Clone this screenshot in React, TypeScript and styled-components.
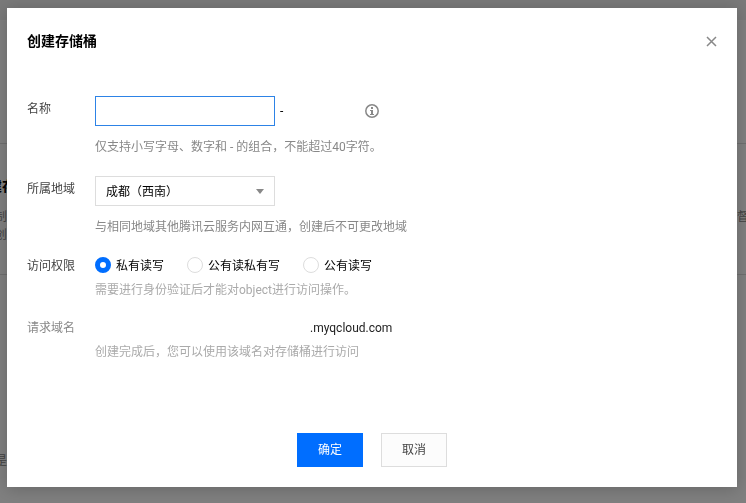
import React, { useState } from "react";
import styled, { createGlobalStyle, css } from "styled-components";

const GlobalStyle = createGlobalStyle`
  * { box-sizing: border-box; }
  body {
    margin: 0;
    overflow: hidden;
    background: #fff;
    color: #000;
    font: 12px/20px Roboto, "Noto Sans CJK SC", sans-serif;
  }
  h1, h2, p { margin: 0; }
  button, input, select { font: inherit; }
`;

const Page = styled.div`
  min-height: 100vh;
  overflow: hidden;
`;

const PageBar = styled.div`
  height: 20px;
  background: #f2f2f2;
`;

const PageSection = styled.section<{ $height: number }>`
  min-height: ${(p) => p.$height}px;
  padding-top: 32px;
  border-bottom: 1px solid #ddd;
`;

const PageTitle = styled.h2`
  margin-bottom: 12px;
  font-size: 14px;
  line-height: 20px;
  text-indent: -26px;
`;

const PageText = styled.p`
  display: flex;
  justify-content: space-between;
  margin: 0 -3px 0 -5px;
  line-height: 18px;
  color: #888;
`;

const PageLink = styled.a`
  display: block;
  margin: 176px 0 0 -5px;
  color: #888;
  text-decoration: none;
`;

const Backdrop = styled.div`
  position: fixed;
  inset: 0;
  padding: 8px 9px 16px 7px;
  background: rgba(0, 0, 0, 0.5);
`;

const Dialog = styled.div`
  padding: 20px;
  background: #fff;
  box-shadow: 0 2px 16px rgba(0, 0, 0, 0.2);
`;

const DialogHeader = styled.header`
  display: flex;
  align-items: center;
  justify-content: space-between;
  height: 26px;
  margin-bottom: 42px;
`;

const DialogTitle = styled.h1`
  font-size: 14px;
  line-height: 24px;
`;

const CloseButton = styled.button`
  display: flex;
  padding: 0;
  border: 0;
  background: none;
  color: #888;
  cursor: pointer;
`;

const Form = styled.form`
  display: flex;
  flex-direction: column;
`;

const Row = styled.div<{ $gap: number }>`
  display: grid;
  grid-template-columns: 68px 1fr;
  margin-bottom: ${(p) => p.$gap}px;
`;

const labelText = css<{ $inset?: boolean; $muted?: boolean }>`
  padding-top: ${(p) => (p.$inset ? 3 : 0)}px;
  line-height: 20px;
  color: ${(p) => (p.$muted ? "#888" : "#444")};
`;

const FieldLabel = styled.label`
  ${labelText}
`;

const FieldName = styled.span`
  ${labelText}
`;

const Control = styled.div`
  display: flex;
  align-items: center;
`;

const TextInput = styled.input`
  width: 180px;
  height: 30px;
  padding: 0 10px;
  border: 1px solid #2d83e6;
  border-radius: 0;
  outline: none;
  background: #fff;
`;

const Dash = styled.span`
  width: 85px;
  margin-left: 5px;
`;

const InfoButton = styled.button`
  display: flex;
  padding: 0;
  border: 0;
  background: none;
  color: #888;
`;

const SelectBox = styled.div`
  position: relative;
  width: 180px;
`;

const Select = styled.select`
  display: block;
  width: 100%;
  height: 30px;
  padding: 2px 28px 0 10px;
  border: 1px solid #ddd;
  border-radius: 0;
  appearance: none;
  background: #fff;
  color: #000;
`;

const SelectArrow = styled.svg`
  position: absolute;
  top: 13px;
  right: 11px;
  pointer-events: none;
`;

const Hint = styled.p<{ $spaced?: boolean; $light?: boolean }>`
  margin-top: ${(p) => (p.$spaced ? 11 : 4)}px;
  line-height: 20px;
  color: ${(p) => (p.$light ? "#aaa" : "#888")};
`;

const RadioList = styled.div`
  display: flex;
  gap: 23px;
`;

const RadioLabel = styled.label`
  display: flex;
  align-items: flex-start;
  gap: 5px;
  line-height: 20px;
  cursor: pointer;
`;

const Radio = styled.input`
  width: 16px;
  height: 16px;
  margin: 1px 0 0;
  border: 1px solid #ddd;
  border-radius: 50%;
  appearance: none;
  background: #fff;

  &:checked {
    border: 5px solid #006eff;
  }
`;

const Domain = styled.div`
  padding-left: 215px;
  line-height: 20px;
  color: #222;
`;

const Actions = styled.footer`
  display: flex;
  justify-content: center;
  gap: 18px;
  margin-top: 71px;
`;

const Button = styled.button<{ $primary?: boolean }>`
  width: 66px;
  height: 34px;
  padding: 0;
  border: 1px solid ${(p) => (p.$primary ? "#006eff" : "#ddd")};
  background: ${(p) => (p.$primary ? "#006eff" : "#fcfcfc")};
  color: ${(p) => (p.$primary ? "#fff" : "#444")};
  cursor: pointer;
`;

const accessOptions = ["私有读写", "公有读私有写", "公有读写"];

export default function App() {
  const [name, setName] = useState("");
  const [access, setAccess] = useState(accessOptions[0]);

  return (
    <>
      <GlobalStyle />
      <Page aria-hidden="true">
        <PageBar />
        <PageSection $height={124} />
        <PageSection $height={131}>
          <PageTitle>创建存储桶</PageTitle>
          <PageText>
            <span>制</span>
            <span>督</span>
          </PageText>
          <PageText>创</PageText>
        </PageSection>
        <PageLink href="#" tabIndex={-1}>
          是
        </PageLink>
      </Page>
      <Backdrop>
        <Dialog role="dialog" aria-modal="true" aria-labelledby="dialog-title">
          <DialogHeader>
            <DialogTitle id="dialog-title">创建存储桶</DialogTitle>
            <CloseButton type="button" aria-label="关闭">
              <svg width="11" height="11" viewBox="0 0 11 11" fill="none">
                <path d="M1 1l9 9M10 1l-9 9" stroke="currentColor" strokeWidth="1.5" />
              </svg>
            </CloseButton>
          </DialogHeader>
          <Form onSubmit={(e) => e.preventDefault()}>
            <Row $gap={19}>
              <FieldLabel htmlFor="bucket-name" $inset>
                名称
              </FieldLabel>
              <div>
                <Control>
                  <TextInput
                    id="bucket-name"
                    type="text"
                    value={name}
                    onChange={(e) => setName(e.target.value)}
                  />
                  <Dash>-</Dash>
                  <InfoButton type="button" aria-label="说明">
                    <svg width="14" height="14" viewBox="0 0 14 14" fill="none">
                      <circle cx="7" cy="7" r="6.2" stroke="currentColor" strokeWidth="1.5" />
                      <path d="M6 3h2v2H6zM5 6h3v4h1v1H5v-1h1V7H5z" fill="currentColor" />
                    </svg>
                  </InfoButton>
                </Control>
                <Hint $spaced>仅支持小写字母、数字和 - 的组合，不能超过40字符。</Hint>
              </div>
            </Row>
            <Row $gap={19}>
              <FieldLabel htmlFor="bucket-region" $inset>
                所属地域
              </FieldLabel>
              <div>
                <SelectBox>
                  <Select id="bucket-region">
                    <option>成都（西南）</option>
                  </Select>
                  <SelectArrow width="8" height="5" viewBox="0 0 8 5">
                    <path d="M0 0h8L4 5z" fill="#888" />
                  </SelectArrow>
                </SelectBox>
                <Hint $spaced>与相同地域其他腾讯云服务内网互通，创建后不可更改地域</Hint>
              </div>
            </Row>
            <Row $gap={18}>
              <FieldName id="access-label">访问权限</FieldName>
              <div>
                <RadioList role="radiogroup" aria-labelledby="access-label">
                  {accessOptions.map((option) => (
                    <RadioLabel key={option}>
                      <Radio
                        type="radio"
                        name="access"
                        checked={access === option}
                        onChange={() => setAccess(option)}
                      />
                      {option}
                    </RadioLabel>
                  ))}
                </RadioList>
                <Hint $light>需要进行身份验证后才能对object进行访问操作。</Hint>
              </div>
            </Row>
            <Row $gap={0}>
              <FieldName $muted>请求域名</FieldName>
              <div>
                <Domain>.myqcloud.com</Domain>
                <Hint $light>创建完成后，您可以使用该域名对存储桶进行访问</Hint>
              </div>
            </Row>
            <Actions>
              <Button type="submit" $primary>
                确定
              </Button>
              <Button type="button">取消</Button>
            </Actions>
          </Form>
        </Dialog>
      </Backdrop>
    </>
  );
}
